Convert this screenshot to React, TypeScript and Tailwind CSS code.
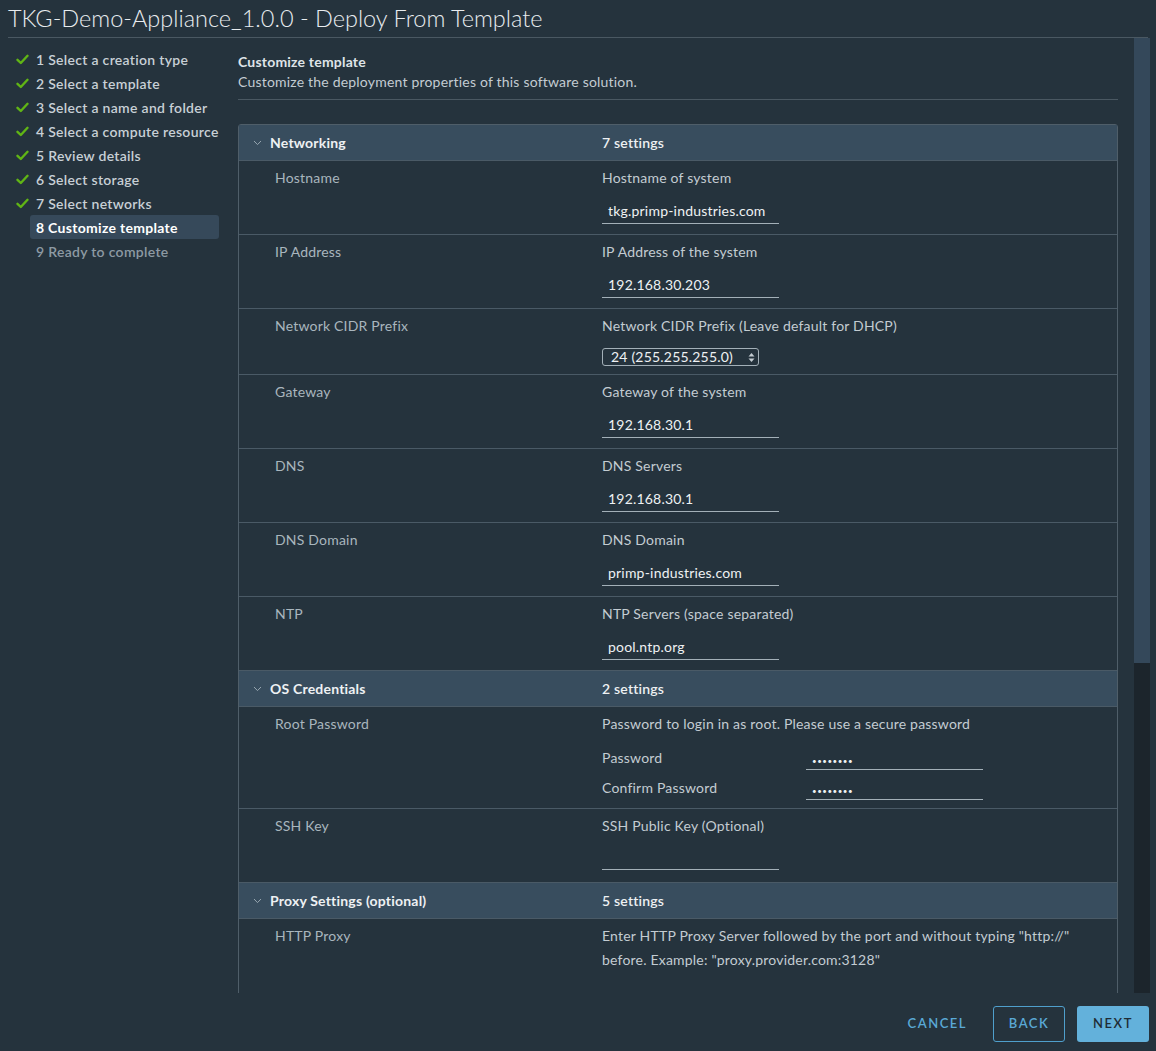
import React from "react";

const steps = [
  "1 Select a creation type",
  "2 Select a template",
  "3 Select a name and folder",
  "4 Select a compute resource",
  "5 Review details",
  "6 Select storage",
  "7 Select networks",
];

const Check = () => (
  <svg width="13" height="11" viewBox="0 0 13 11" fill="none">
    <path d="M1.5 5.8 L4.8 9 L11.5 1.8" stroke="#60b515" strokeWidth="2.4" strokeLinecap="round" strokeLinejoin="round" />
  </svg>
);

const Chevron = () => (
  <svg width="9" height="6" viewBox="0 0 9 6" fill="none">
    <path d="M1 1 L4.5 4.6 L8 1" stroke="#97a6b0" strokeWidth="1" />
  </svg>
);

const SectionHeader = ({ title, count }: { title: string; count: string }) => (
  <div className="grid grid-cols-[363px_1fr] h-[36px] items-center bg-[#384d5e] border-b border-[#4a5a66] text-[14px] text-[#eef1f3]">
    <div className="flex items-center pl-[14px]">
      <Chevron />
      <span className="ml-[8px] font-bold">{title}</span>
    </div>
    <div className="font-semibold">{count}</div>
  </div>
);

const Input = ({ value }: { value: string }) => (
  <div className="w-[177px] h-[24px] border-b border-[#a3b0b8] pl-[6px] text-[14px] leading-[22px] text-[#eef1f3]">
    {value}
  </div>
);

const Row = ({ label, children }: { label: string; children: React.ReactNode }) => (
  <div className="grid grid-cols-[363px_1fr] border-b border-[#4a5a66]">
    <div className="pl-[36px] pt-[5px] text-[14px] leading-[24px] text-[#a9b6be]">{label}</div>
    <div className="pt-[5px]">{children}</div>
  </div>
);

const Desc = ({ children }: { children: React.ReactNode }) => (
  <div className="text-[14px] leading-[24px] text-[#c3ccd2]">{children}</div>
);

const TextRow = ({ label, desc, value }: { label: string; desc: string; value: string }) => (
  <Row label={label}>
    <Desc>{desc}</Desc>
    <div className="mt-[10px] pb-[10px]">
      <Input value={value} />
    </div>
  </Row>
);

const Dots = () => <span className="text-[8px] tracking-[0.5px] leading-[20px]">••••••••</span>;

export default function App() {
  return (
    <div className="h-[1051px] w-full bg-[#25333d] flex flex-col overflow-hidden font-['Lato','Liberation_Sans',sans-serif] tracking-[0.2px]">
      <div className="mx-2 h-[38px] border-b border-[#4a5862] flex items-center shrink-0">
        <h1 className="text-[23.5px] font-light text-[#e8ecef] leading-none tracking-normal">
          TKG-Demo-Appliance_1.0.0 - Deploy From Template
        </h1>
      </div>

      <div className="flex flex-1 min-h-0 pl-2 pr-[6px]">
        <div className="w-[230px] shrink-0 pt-[9px] text-[14px] font-semibold tracking-[0.3px]">
          {steps.map((s) => (
            <div key={s} className="flex items-center h-[24px]">
              <div className="w-[28px] pl-[8px] flex items-center">
                <Check />
              </div>
              <span className="text-[#c8d0d6]">{s}</span>
            </div>
          ))}
          <div className="flex items-center h-[24px]">
            <div className="ml-[22px] w-[189px] h-[24px] px-[6px] rounded-[3px] bg-[#36495a] flex items-center text-white font-bold">
              8 Customize template
            </div>
          </div>
          <div className="flex items-center h-[24px] pl-[28px] text-[#8d9aa3]">9 Ready to complete</div>
        </div>

        <div className="flex-1 flex min-h-0">
          <div className="w-[880px] overflow-hidden pt-[15px]">
            <div className="border-b border-[#4a5862] pb-[8px]">
              <div className="text-[14px] leading-[18px] font-bold text-[#dfe4e8]">Customize template</div>
              <div className="mt-[2px] text-[14px] leading-[18px] text-[#c3ccd2]">
                Customize the deployment properties of this software solution.
              </div>
            </div>

            <div className="mt-[24px] border border-[#4f5e69] rounded-t-[3px]">
              <SectionHeader title="Networking" count="7 settings" />
              <TextRow label="Hostname" desc="Hostname of system" value="tkg.primp-industries.com" />
              <TextRow label="IP Address" desc="IP Address of the system" value="192.168.30.203" />
              <Row label="Network CIDR Prefix">
                <Desc>Network CIDR Prefix (Leave default for DHCP)</Desc>
                <div className="mt-[10px] pb-[8px]">
                  <div className="w-[157px] h-[18px] border border-[#a3b0b8] rounded-[3px] flex items-center justify-between pl-[8px] pr-[3px] text-[14px] text-[#eef1f3]">
                    <span className="leading-none">24 (255.255.255.0)</span>
                    <svg width="7" height="11" viewBox="0 0 7 11">
                      <path d="M3.5 1 L6.5 4.5 H0.5 Z" fill="#c3ccd2" />
                      <path d="M3.5 10 L6.5 6.5 H0.5 Z" fill="#c3ccd2" />
                    </svg>
                  </div>
                </div>
              </Row>
              <TextRow label="Gateway" desc="Gateway of the system" value="192.168.30.1" />
              <TextRow label="DNS" desc="DNS Servers" value="192.168.30.1" />
              <TextRow label="DNS Domain" desc="DNS Domain" value="primp-industries.com" />
              <TextRow label="NTP" desc="NTP Servers (space separated)" value="pool.ntp.org" />

              <SectionHeader title="OS Credentials" count="2 settings" />
              <Row label="Root Password">
                <Desc>Password to login in as root. Please use a secure password</Desc>
                <div className="mt-[10px] pb-[8px] flex flex-col gap-[6px]">
                  {["Password", "Confirm Password"].map((l) => (
                    <div key={l} className="grid grid-cols-[204px_1fr] items-end">
                      <div className="text-[14px] leading-[24px] text-[#c3ccd2]">{l}</div>
                      <div className="w-[177px] h-[24px] border-b border-[#a3b0b8] pl-[6px] text-[#eef1f3]">
                        <Dots />
                      </div>
                    </div>
                  ))}
                </div>
              </Row>
              <Row label="SSH Key">
                <Desc>SSH Public Key (Optional)</Desc>
                <div className="mt-[8px] pb-[12px]">
                  <Input value="" />
                </div>
              </Row>

              <SectionHeader title="Proxy Settings (optional)" count="5 settings" />
              <Row label="HTTP Proxy">
                <Desc>
                  Enter HTTP Proxy Server followed by the port and without typing "http://"
                  <br />
                  before. Example: "proxy.provider.com:3128"
                </Desc>
                <div className="h-[60px]" />
              </Row>
            </div>
          </div>

          <div className="ml-[16px] w-[16px] flex flex-col shrink-0">
            <div className="h-[625px] bg-[#34485a]" />
            <div className="flex-1 bg-[#1c252c]" />
          </div>
        </div>
      </div>

      <div className="h-[58px] shrink-0 flex items-center justify-end pt-[3px] pr-[7px] text-[13px] font-semibold tracking-[1.5px]">
        <button className="h-[35px] px-[16px] text-[#5aa9d6]">CANCEL</button>
        <button className="ml-[10px] h-[36px] w-[72px] border border-[#4f9fcc] rounded-[3px] text-[#5aa9d6]">
          BACK
        </button>
        <button className="ml-[12px] h-[36px] w-[72px] rounded-[3px] bg-[#63b1db] text-[#1f2c35]">
          NEXT
        </button>
      </div>
    </div>
  );
}
